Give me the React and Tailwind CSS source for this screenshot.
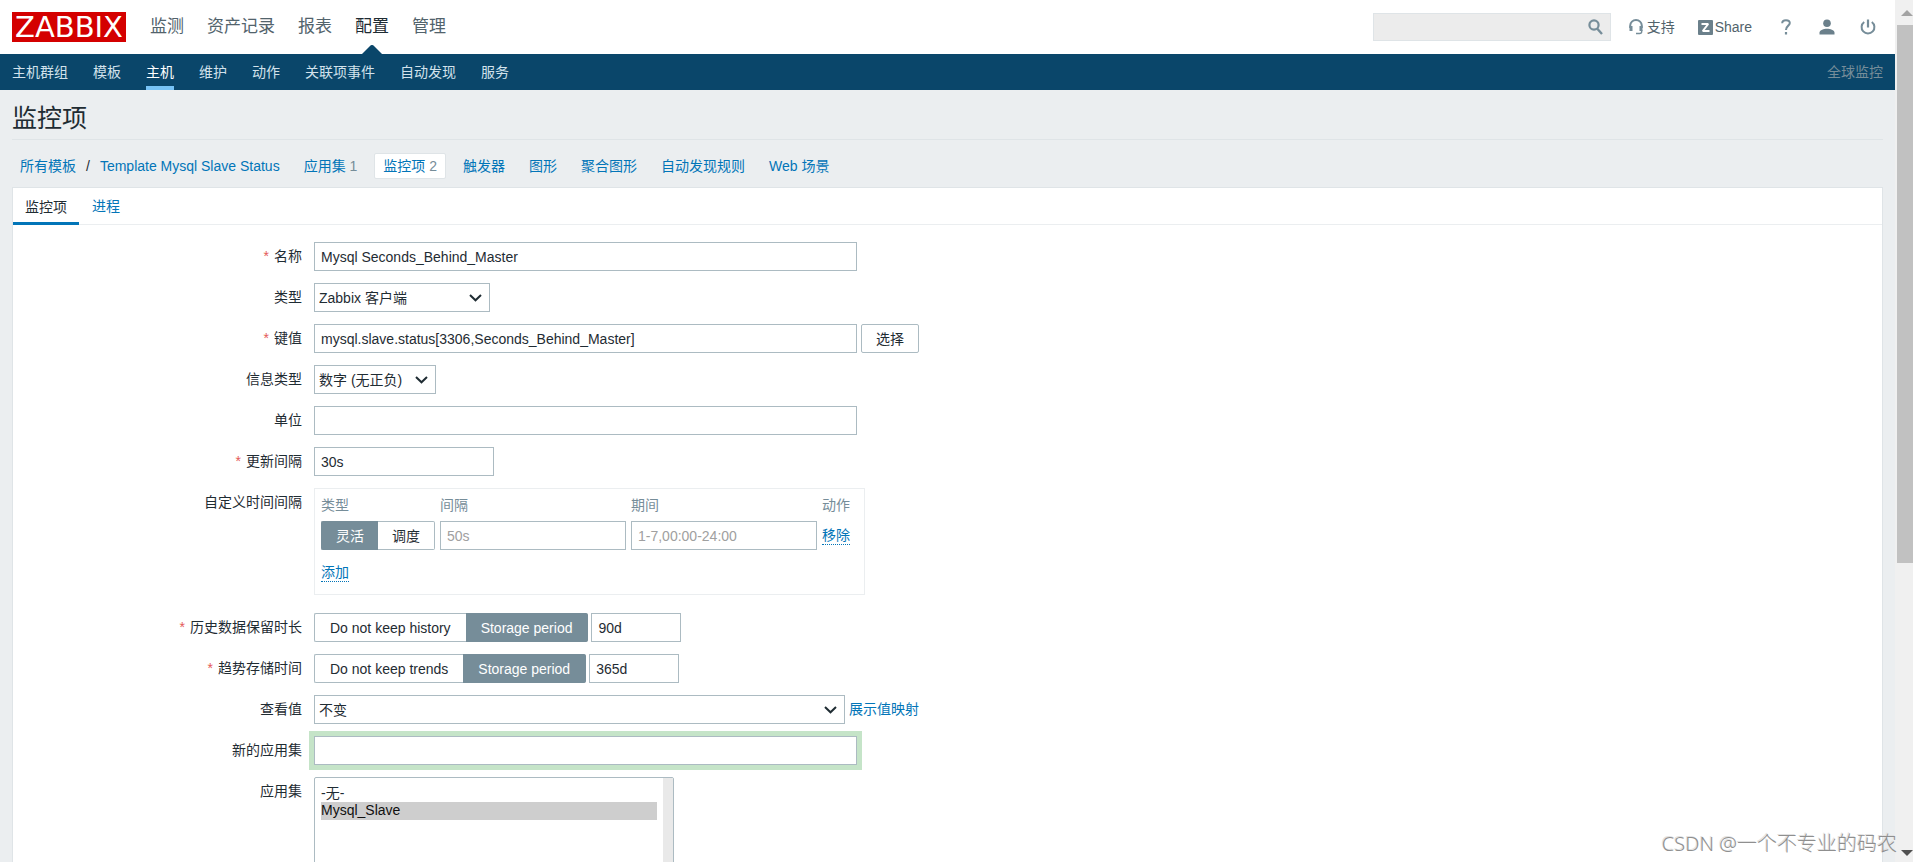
import React from "react";

const MAIN_MENU = ["监测", "资产记录", "报表", "配置", "管理"];
const SUB_MENU = ["主机群组", "模板", "主机", "维护", "动作", "关联项事件", "自动发现", "服务"];

const inputClass =
  "h-[29px] border border-[#acbbc2] bg-white px-[6px] text-[#1f2c33] outline-none placeholder:text-[#a0a0a0]";

export default function App() {
  return (
    <div className="relative flex h-screen overflow-hidden bg-[#ebeef0] font-['Liberation_Sans','Noto_Sans_CJK_SC',sans-serif] text-[14px] leading-[20px] text-[#1f2c33]">
      <div className="flex min-w-0 flex-1 flex-col overflow-hidden">
        <TopBar />
        <SubNav />
        <main className="flex flex-1 flex-col px-[12px]">
          <h1 className="border-b border-[#dfe4e7] pt-[12px] pb-[5px] text-[25px] leading-[32px]">
            监控项
          </h1>
          <Breadcrumbs />
          <ItemPanel />
        </main>
      </div>

      <Scrollbar />

      <p className="absolute right-[16px] bottom-[4px] font-['Noto_Sans','Noto_Sans_CJK_SC',sans-serif] text-[20px] leading-[28px] font-light text-[#8f8f8f] [text-shadow:-1px_-1px_0_#e2e2e2]">
        CSDN @一个不专业的码农
      </p>
    </div>
  );
}

function TopBar() {
  return (
    <header className="flex h-[54px] shrink-0 items-center bg-white pr-[19px] pl-[12px]">
      <a
        href="#"
        className="flex h-[30px] w-[114px] items-center justify-center bg-[#d40000] font-['DejaVu_Sans',sans-serif] text-[29px] leading-[30px] text-white"
      >
        ZABBIX
      </a>

      <nav className="ml-[24px] flex h-full gap-[23px] text-[17px]">
        {MAIN_MENU.map((item) => (
          <a
            key={item}
            href="#"
            className={`relative flex items-center ${
              item === "配置" ? "text-[#1f2c33]" : "text-[#52636c]"
            }`}
          >
            {item}
            {item === "配置" && (
              <svg
                className="absolute bottom-0 left-1/2 h-[9px] w-[20px] -translate-x-1/2"
                viewBox="0 0 20 9"
              >
                <path d="M0 9 8.500 0.500Q10 -0.600 11.500 0.500L20 9z" fill="#0a466a" />
              </svg>
            )}
          </a>
        ))}
      </nav>

      <div className="ml-auto flex items-center text-[#52636c]">
        <form className="flex h-[28px] w-[238px] items-center border border-[#dfe4e7] bg-[#ececec]">
          <input
            type="text"
            aria-label="搜索"
            className="h-full min-w-0 flex-1 bg-transparent px-[6px] outline-none"
          />
          <button type="button" aria-label="搜索" className="mr-[7px]">
            <svg width="15" height="16" viewBox="0 0 15 16" fill="none" stroke="#768d99">
              <circle cx="6" cy="6" r="4.600" strokeWidth="2.200" />
              <path d="M9.300 9.800 14 15" strokeWidth="2.400" />
            </svg>
          </button>
        </form>

        <a href="#" className="ml-[18px] flex items-center gap-[4px]">
          <svg width="14" height="16" viewBox="0 0 14 16" fill="none" stroke="#768d99">
            <path d="M1.200 9V6.500a5.800 5.500 0 0 1 11.600 0V9" strokeWidth="2" />
            <path d="M2 7v5M12 7v5" strokeWidth="3" />
            <path d="M12.700 11v1.500q0 2-2 2H7" strokeWidth="1.400" />
          </svg>
          支持
        </a>
        <a href="#" className="ml-[23px] flex items-center gap-[2px]">
          <svg width="15" height="15" viewBox="0 0 15 15">
            <rect width="15" height="15" rx="1" fill="#6b808b" />
            <path
              d="M3.500 4H10.200L4.800 11H11.500"
              fill="none"
              stroke="#fff"
              strokeWidth="2"
              strokeLinejoin="bevel"
            />
          </svg>
          Share
        </a>
        <a href="#" aria-label="帮助" className="ml-[29px]">
          <svg width="10" height="16" viewBox="0 0 10 16" fill="none" stroke="#768d99">
            <path
              d="M1.200 4.200C1.200 2.200 2.800 1.200 5 1.200S8.800 2.300 8.800 4.100C8.800 6.800 5 6.600 5 11"
              strokeWidth="2"
            />
            <path d="M5 13v2.500" strokeWidth="2.200" />
          </svg>
        </a>
        <a href="#" aria-label="用户" className="ml-[28px]">
          <svg width="16" height="16" viewBox="0 0 16 16" fill="#6b808b">
            <circle cx="8" cy="4.200" r="3.800" />
            <path d="M0.500 15.500v-2C1 11 4.500 9.800 8 9.800s7 1.200 7.500 3.700v2z" />
          </svg>
        </a>
        <a href="#" aria-label="登出" className="ml-[25px]">
          <svg width="16" height="16" viewBox="0 0 16 16" fill="none" stroke="#768d99">
            <path d="M4.200 3a6.400 6.400 0 1 0 7.600 0" strokeWidth="2" />
            <path d="M8 0.500v8" strokeWidth="2.200" />
          </svg>
        </a>
      </div>
    </header>
  );
}

function SubNav() {
  return (
    <nav className="flex h-[36px] shrink-0 gap-[25px] bg-[#0a466a] px-[12px]">
      {SUB_MENU.map((item) => (
        <a
          key={item}
          href="#"
          className={`flex items-center border-y-4 border-t-transparent ${
            item === "主机"
              ? "border-b-[#78c3f5] text-white"
              : "border-b-transparent text-[#d2e2ec]"
          }`}
        >
          {item}
        </a>
      ))}
      <span className="ml-auto flex items-center text-[#768d99]">全球监控</span>
    </nav>
  );
}

function Breadcrumbs() {
  return (
    <nav className="flex h-[47px] items-center gap-[24px] pt-[4px] pl-[8px] text-[#0275b8]">
      <span className="flex gap-[10px]">
        <a href="#">所有模板</a>
        <span className="text-[#1f2c33]">/</span>
        <a href="#">Template Mysql Slave Status</a>
      </span>
      <a href="#">
        应用集 <span className="text-[#768d99]">1</span>
      </a>
      <a
        href="#"
        className="-mx-[7px] rounded-[2px] border border-[#dfe4e7] bg-white px-[8px] py-[2px]"
      >
        监控项 <span className="text-[#768d99]">2</span>
      </a>
      <a href="#">触发器</a>
      <a href="#">图形</a>
      <a href="#">聚合图形</a>
      <a href="#">自动发现规则</a>
      <a href="#">Web 场景</a>
    </nav>
  );
}

function ItemPanel() {
  return (
    <section className="flex-1 border border-b-0 border-[#dfe4e7] bg-white">
      <div className="flex h-[37px] border-b border-[#ebeef0]">
        <button
          type="button"
          className="-mb-px h-[37px] border-y-3 border-t-transparent border-b-[#0275b8] px-[12px]"
        >
          监控项
        </button>
        <button type="button" className="px-[13px] text-[#0275b8]">
          进程
        </button>
      </div>

      <form className="flex flex-col gap-[12px] pt-[17px]">
        <Row label="名称" htmlFor="name" required>
          <input
            id="name"
            type="text"
            defaultValue="Mysql Seconds_Behind_Master"
            className={`${inputClass} w-[543px]`}
          />
        </Row>
        <Row label="类型" htmlFor="type">
          <Select id="type" value="Zabbix 客户端" width="w-[176px]" />
        </Row>
        <Row label="键值" htmlFor="key" required>
          <input
            id="key"
            type="text"
            defaultValue="mysql.slave.status[3306,Seconds_Behind_Master]"
            className={`${inputClass} w-[543px]`}
          />
          <button
            type="button"
            className="ml-[4px] h-[29px] rounded-[2px] border border-[#acbbc2] px-[14px]"
          >
            选择
          </button>
        </Row>
        <Row label="信息类型" htmlFor="value-type">
          <Select id="value-type" value="数字 (无正负)" width="w-[122px]" />
        </Row>
        <Row label="单位" htmlFor="units">
          <input id="units" type="text" className={`${inputClass} w-[543px]`} />
        </Row>
        <Row label="更新间隔" htmlFor="delay" required>
          <input
            id="delay"
            type="text"
            defaultValue="30s"
            className={`${inputClass} w-[180px]`}
          />
        </Row>
        <Row label="自定义时间间隔">
          <CustomIntervals />
        </Row>
        <Row label="历史数据保留时长" htmlFor="history" required>
          <Segmented
            name="history-mode"
            options={["Do not keep history", "Storage period"]}
            selected={1}
            padding="px-[15px]"
          />
          <input
            id="history"
            type="text"
            defaultValue="90d"
            className={`${inputClass} ml-[3px] w-[90px]`}
          />
        </Row>
        <Row label="趋势存储时间" htmlFor="trends" required>
          <Segmented
            name="trends-mode"
            options={["Do not keep trends", "Storage period"]}
            selected={1}
            padding="px-[15px]"
          />
          <input
            id="trends"
            type="text"
            defaultValue="365d"
            className={`${inputClass} ml-[3px] w-[90px]`}
          />
        </Row>
        <Row label="查看值" htmlFor="valuemap">
          <Select id="valuemap" value="不变" width="w-[531px]" />
          <a href="#" className="ml-[4px] leading-[29px] text-[#0275b8]">
            展示值映射
          </a>
        </Row>
        <Row label="新的应用集" htmlFor="new-application">
          <input
            id="new-application"
            type="text"
            className={`${inputClass} w-[543px] shadow-[0_0_0_5px_#c5e4c8]`}
          />
        </Row>
        <Row label="应用集" htmlFor="applications">
          <div className="flex w-[360px] rounded-[2px] border border-[#acbbc2]">
            <select
              id="applications"
              multiple
              size={10}
              defaultValue={["Mysql_Slave"]}
              className="h-[180px] flex-1 overflow-hidden px-[6px] py-[4px] outline-none"
            >
              <option value="none" className="h-[20px] p-0">
                -无-
              </option>
              <option value="Mysql_Slave" className="h-[18px] p-0">
                Mysql_Slave
              </option>
            </select>
            <div className="w-[10px] bg-[#e9e9e9]" />
          </div>
        </Row>
      </form>
    </section>
  );
}

function Row({ label, htmlFor, required = false, children }) {
  const Label = htmlFor ? "label" : "span";
  return (
    <div className="flex items-start">
      <Label htmlFor={htmlFor} className="mr-[12px] w-[289px] text-right leading-[29px]">
        {required && <span className="mr-[5px] text-[#e45959]">*</span>}
        {label}
      </Label>
      {children}
    </div>
  );
}

function Select({ id, value, width }) {
  return (
    <div className={`grid items-center ${width}`}>
      <select
        id={id}
        defaultValue={value}
        className="col-start-1 row-start-1 h-[29px] w-full appearance-none border border-[#acbbc2] bg-white pr-[24px] pl-[4px] outline-none"
      >
        <option>{value}</option>
      </select>
      <svg
        className="pointer-events-none col-start-1 row-start-1 mr-[8px] justify-self-end"
        width="13"
        height="8"
        viewBox="0 0 13 8"
        fill="none"
        stroke="#1f2c33"
        strokeWidth="2"
      >
        <path d="M1 1 6.500 6.300 12 1" />
      </svg>
    </div>
  );
}

function Segmented({ name, options, selected, padding = "px-[14px]" }) {
  return (
    <div className="flex h-[29px]">
      {options.map((option, i) => (
        <label
          key={option}
          className={`relative flex items-center border border-[#acbbc2] first:rounded-l-[2px] first:border-r-0 last:rounded-r-[2px] last:border-l-0 has-checked:border-[#768d99] has-checked:bg-[#768d99] has-checked:text-white ${padding}`}
        >
          <input
            type="radio"
            name={name}
            defaultChecked={i === selected}
            className="sr-only"
          />
          {option}
        </label>
      ))}
    </div>
  );
}

function CustomIntervals() {
  return (
    <div className="mb-[6px] h-[107px] w-[551px] border border-[#ebeef0] pt-[6px] pl-[6px]">
      <table className="text-left">
        <thead>
          <tr className="text-[#768d99]">
            <th className="pr-[5px] pb-[6px] font-normal">类型</th>
            <th className="pr-[5px] pb-[6px] font-normal">间隔</th>
            <th className="pr-[5px] pb-[6px] font-normal">期间</th>
            <th className="pb-[6px] font-normal">动作</th>
          </tr>
        </thead>
        <tbody>
          <tr>
            <td className="pr-[5px]">
              <Segmented name="interval-type" options={["灵活", "调度"]} selected={0} />
            </td>
            <td className="pr-[5px]">
              <input
                type="text"
                aria-label="间隔"
                placeholder="50s"
                className={`${inputClass} block w-[186px]`}
              />
            </td>
            <td className="pr-[5px]">
              <input
                type="text"
                aria-label="期间"
                placeholder="1-7,00:00-24:00"
                className={`${inputClass} block w-[186px]`}
              />
            </td>
            <td>
              <DottedButton>移除</DottedButton>
            </td>
          </tr>
          <tr>
            <td colSpan={4} className="pt-[13px]">
              <DottedButton>添加</DottedButton>
            </td>
          </tr>
        </tbody>
      </table>
    </div>
  );
}

function DottedButton({ children }) {
  return (
    <button
      type="button"
      className="block border-b border-dotted border-[#0275b8] leading-[18px] text-[#0275b8]"
    >
      {children}
    </button>
  );
}

function Scrollbar() {
  return (
    <div className="flex w-[18px] shrink-0 flex-col items-end bg-[#f0f0f0]">
      <div className="flex h-[25px] w-full items-center justify-end">
        <svg width="12" height="6" viewBox="0 0 12 6">
          <path d="M0 6 6 0l6 6z" fill="#a3a3a3" />
        </svg>
      </div>
      <div className="h-[538px] w-[16px] bg-[#c1c1c1]" />
      <svg className="mt-auto mb-[6px]" width="12" height="6" viewBox="0 0 12 6">
        <path d="M0 0h12L6 6z" fill="#505050" />
      </svg>
    </div>
  );
}
